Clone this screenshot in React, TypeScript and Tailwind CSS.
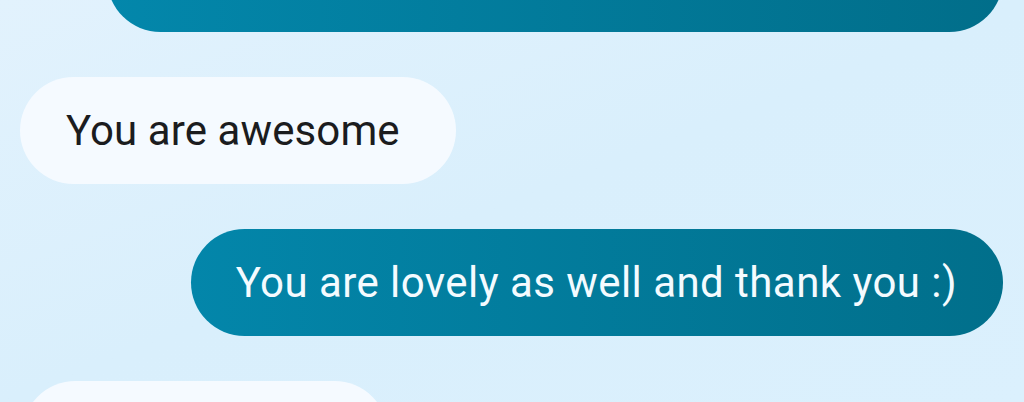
import React from 'react';

interface Message {
  id: number;
  text: string;
  mine: boolean;
}

const messages: Message[] = [
  { id: 1, text: 'You are awesome', mine: false },
  { id: 2, text: 'You are lovely as well and thank you :)', mine: true },
];

const Bubble: React.FC<{ msg: Message }> = ({ msg }) => {
  if (msg.mine) {
    return (
      <div className="flex justify-end">
        <div className="h-[107px] flex items-center rounded-full pl-[45px] pr-[46px] bg-gradient-to-r from-[#0386aa] to-[#016f8b] text-[#f4fbff] text-[42px] tracking-[0.45px]">
          {msg.text}
        </div>
      </div>
    );
  }
  return (
    <div className="flex justify-start">
      <div className="h-[107px] flex items-center rounded-full pl-[46px] pr-[56px] bg-[#f5faff] text-[#1b1c1e] text-[42px] tracking-[0.1px]">
        {msg.text}
      </div>
    </div>
  );
};

const App: React.FC = () => {
  return (
    <div
      className="w-[1024px] h-[402px] overflow-hidden bg-gradient-to-br from-[#e2f2fd] via-[#d9effc] to-[#dbf0fd]"
      style={{ fontFamily: 'Roboto, "Liberation Sans", sans-serif' }}
    >
      <div className="flex flex-col gap-[45px] pl-[20px] pr-[21px] mt-[-75px]">
        {/* previous message, scrolled mostly out of view */}
        <div className="flex justify-end">
          <div className="h-[107px] w-[896px] rounded-full bg-gradient-to-r from-[#0387ab] to-[#016e8a]" />
        </div>
        {messages.map(m => (
          <Bubble key={m.id} msg={m} />
        ))}
        {/* next message, only its top edge shows */}
        <div className="flex justify-start pl-[2px]">
          <div className="h-[107px] w-[366px] rounded-full bg-[#f5faff]" />
        </div>
      </div>
    </div>
  );
};

export default App;
